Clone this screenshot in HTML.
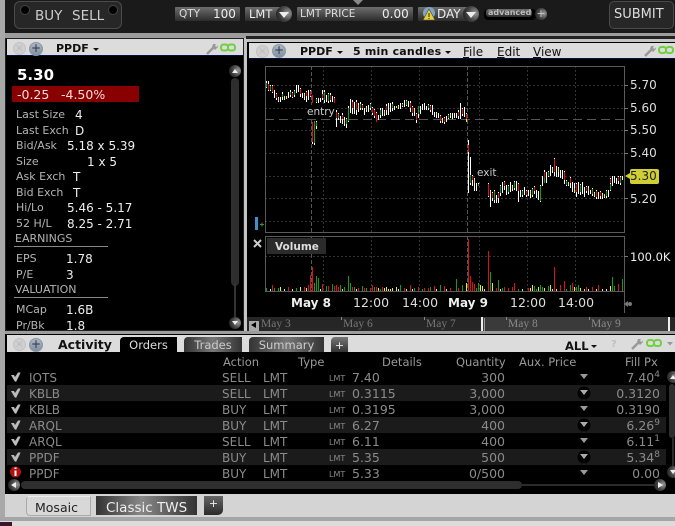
<!DOCTYPE html>
<html><head><meta charset="utf-8"><style>
html,body{margin:0;padding:0;width:675px;height:526px;overflow:hidden;background:#c4c4c4}
body{position:relative;font-family:"DejaVu Sans","Liberation Sans",sans-serif;font-size:11px;color:#ccc}
div,span,svg{position:absolute}
.t{white-space:nowrap;line-height:16px;height:16px}
.l{color:#b4b4b4;font-size:11px}
.v{color:#eee;font-size:12px}
.ax{color:#ddd;font-size:12px;left:630px}
.dt{color:#ddd;font-size:12.500px;top:295px}
.dtb{color:#eee;font-size:12px;font-weight:bold;top:295px}
.nv{font-family:"Liberation Serif",serif;color:#777;font-size:11.5px;top:316px}
.g{color:#8a8a8a;font-size:12px}
.h{color:#999;font-size:11.5px;top:354px}
.box{background:linear-gradient(#6e6e6e,#2c2c2c);border-radius:1px}
.rnd{border-radius:50%;background:radial-gradient(circle at 75% 45%,#999,#444 50%,#111)}
.row{left:7px;width:659px;height:16px;background:#1b1b1b}
.tab{top:337px;height:15px;background:linear-gradient(90deg,#333,#777 50%,#333);color:#ccc;font-size:11.5px;line-height:17px;text-align:center;border-radius:4px 0 0 0}
.hd{background:#dcdcdc;border-bottom:1px solid #00104a}
.x1{width:13px;height:13px;border-radius:50%;background:#cfcfcf;border:1px solid #c2c2c2;box-sizing:border-box;color:#bbb;font-size:10px;line-height:11px;text-align:center}
.x2{width:14px;height:14px;border-radius:50%;background:linear-gradient(#a9b8c4,#7f90a0);border:1px solid #8a98a4;box-sizing:border-box;color:#334;font-size:12px;line-height:11px;text-align:center}
.bk{color:#111;font-weight:bold;font-size:12px}
</style></head><body>

<!-- top bar -->
<div style="left:5px;top:0;width:670px;height:33px;background:#1a1a1a"></div>
<div style="left:353px;top:0;width:0;height:0;border-left:5px solid transparent;border-right:5px solid transparent;border-top:5px solid #888"></div>
<div style="left:14px;top:1px;width:106px;height:26px;background:#272727;border:1px solid #4a4a4a;border-radius:6px"></div>
<div style="left:20px;top:5px;width:8px;height:8px;border-radius:50%;background:#000;border:1px solid #444"></div>
<div style="left:108px;top:5px;width:8px;height:8px;border-radius:50%;background:#000;border:1px solid #444"></div>
<span class="t" style="left:35px;top:8px;font-size:13.500px;color:#ccc">BUY</span>
<span class="t" style="left:72px;top:8px;font-size:13.500px;color:#ccc">SELL</span>

<div class="box" style="left:175px;top:7px;width:65px;height:14px"></div>
<span class="t" style="left:179px;top:6px;font-size:10.500px;color:#ddd">QTY</span>
<span class="t" style="left:213px;top:6px;font-size:12px;color:#eee">100</span>
<div class="box" style="left:245px;top:7px;width:36px;height:14px"></div>
<span class="t" style="left:249px;top:6px;font-size:11.5px;color:#eee">LMT</span>
<div class="rnd" style="left:276px;top:6px;width:16px;height:16px"></div>
<div style="left:279px;top:12px;border-left:5px solid transparent;border-right:5px solid transparent;border-top:6px solid #eee"></div>
<div class="box" style="left:297px;top:7px;width:116px;height:14px"></div>
<span class="t" style="left:300px;top:6px;font-size:10.500px;color:#ddd">LMT PRICE</span>
<span class="t" style="left:382px;top:6px;font-size:12px;color:#eee">0.00</span>
<div class="box" style="left:418px;top:7px;width:52px;height:14px"></div>
<svg style="left:422px;top:7px" width="14" height="14"><circle cx="7" cy="6" r="6" fill="#7fa6c8"/><path d="M7 2L13 13H1Z" fill="#e8d040" stroke="#443" stroke-width=".6"/><path d="M7 6v4M7 11v1" stroke="#222"/></svg>
<span class="t" style="left:437px;top:6px;font-size:12px;color:#eee">DAY</span>
<div class="rnd" style="left:463px;top:6px;width:16px;height:16px"></div>
<div style="left:466px;top:12px;border-left:5px solid transparent;border-right:5px solid transparent;border-top:6px solid #eee"></div>
<div style="left:484px;top:9px;width:52px;height:11px;background:#000;border-radius:4px"></div>
<div class="box" style="left:486px;top:9px;width:46px;height:8px;border-radius:3px"></div>
<span class="t" style="left:488px;top:5px;font-size:8px;font-weight:bold;color:#bbb">advanced</span>
<div class="rnd" style="left:535px;top:8px;width:12px;height:12px;color:#ccc;font-size:11px;line-height:12px;text-align:center">+</div>
<div style="left:609px;top:1px;width:63px;height:26px;background:#272727;border:1px solid #4a4a4a;border-radius:5px"></div>
<span class="t" style="left:614px;top:7px;font-size:13px;color:#ddd">SUBMIT</span>

<!-- strips -->
<div style="left:0;top:33px;width:675px;height:5px;background:#9c9c9c"></div>
<div style="left:246px;top:36px;width:429px;height:3px;background:#222"></div>
<div style="left:0;top:0;width:5px;height:526px;background:#a8a8a8"></div>

<!-- left panel -->
<div style="left:5px;top:38px;width:239px;height:293px;background:#000;border:1px solid #222;box-sizing:border-box"></div>
<div class="hd" style="left:7px;top:39px;width:236px;height:16px"></div>
<div class="x1" style="left:13px;top:42px">×</div>
<div class="x2" style="left:29px;top:42px">+</div>
<span class="t bk" style="left:56px;top:41px;font-size:11px">PPDF</span>
<div style="left:93px;top:48px;border-left:3px solid transparent;border-right:3px solid transparent;border-top:3px solid #111"></div>
<svg style="left:205px;top:42px" width="34" height="14"><path d="M2 12L9 5" stroke="#999" stroke-width="2.5"/><path d="M8 2l3 0-1 2 2 1 1-2 0 2-3 3-3-3z" fill="#999"/><rect x="16" y="2.500" width="7" height="6" rx="2.500" fill="none" stroke="#6fd040" stroke-width="2"/><rect x="23" y="2.500" width="7" height="6" rx="2.500" fill="none" stroke="#6fd040" stroke-width="2"/></svg>

<span class="t" style="left:17px;top:67px;font-size:15px;font-weight:bold;color:#fff">5.30</span>
<div style="left:12px;top:86px;width:127px;height:16px;background:#880000"></div>
<span class="t" style="left:17px;top:87px;font-size:12.500px;color:#f0dcdc">-0.25</span>
<span class="t" style="left:61px;top:87px;font-size:12.500px;color:#f0dcdc">-4.50%</span>

<div style="left:7px;top:57px;width:236px;height:273px;overflow:hidden">
<span class="t l" style="left:9px;top:50px">Last Size</span><span class="t v" style="left:68px;top:50px">4</span>
<span class="t l" style="left:9px;top:66px">Last Exch</span><span class="t v" style="left:68px;top:66px">D</span>
<span class="t l" style="left:9px;top:81px">Bid/Ask</span><span class="t v" style="left:60px;top:81px">5.18 x 5.39</span>
<span class="t l" style="left:9px;top:97px">Size</span><span class="t v" style="left:80px;top:97px">1 x 5</span>
<span class="t l" style="left:9px;top:112px">Ask Exch</span><span class="t v" style="left:66px;top:112px">T</span>
<span class="t l" style="left:9px;top:128px">Bid Exch</span><span class="t v" style="left:66px;top:128px">T</span>
<span class="t l" style="left:9px;top:143px">Hi/Lo</span><span class="t v" style="left:60px;top:143px">5.46 - 5.17</span>
<span class="t l" style="left:9px;top:159px">52 H/L</span><span class="t v" style="left:60px;top:159px">8.25 - 2.71</span>
<span class="t l" style="left:8px;top:174px">EARNINGS</span>
<div style="left:7px;top:189px;width:94px;height:1px;background:#888"></div>
<span class="t l" style="left:9px;top:194px">EPS</span><span class="t v" style="left:59px;top:194px">1.78</span>
<span class="t l" style="left:9px;top:210px">P/E</span><span class="t v" style="left:59px;top:210px">3</span>
<span class="t l" style="left:8px;top:225px">VALUATION</span>
<div style="left:7px;top:240px;width:94px;height:1px;background:#888"></div>
<span class="t l" style="left:9px;top:245px">MCap</span><span class="t v" style="left:59px;top:245px">1.6B</span>
<span class="t l" style="left:9px;top:261px">Pr/Bk</span><span class="t v" style="left:59px;top:261px">1.8</span>
</div>
<!-- left scrollbar -->
<div class="rnd" style="left:229px;top:65px;width:12px;height:12px"></div>
<div style="left:232px;top:69px;border-left:3.500px solid transparent;border-right:3.500px solid transparent;border-bottom:4px solid #eee"></div>
<div style="left:231px;top:78px;width:8px;height:208px;background:#2e2e2e;border-radius:4px"></div>
<div style="left:234px;top:284px;width:2px;height:34px;background:#333"></div>
<div class="rnd" style="left:229px;top:317px;width:12px;height:12px"></div>
<div style="left:232px;top:321px;border-left:3.500px solid transparent;border-right:3.500px solid transparent;border-top:4px solid #eee"></div>

<!-- chart panel -->
<div style="left:247px;top:42px;width:428px;height:290px;background:#000"></div>
<div class="hd" style="left:249px;top:43px;width:426px;height:15px"></div>
<div class="x1" style="left:256px;top:45px">×</div>
<div class="x2" style="left:272px;top:44px">+</div>
<span class="t bk" style="left:300px;top:44px;font-size:11px">PPDF</span>
<div style="left:337px;top:51px;border-left:3px solid transparent;border-right:3px solid transparent;border-top:3px solid #111"></div>
<span class="t bk" style="left:353px;top:44px;font-size:11px;letter-spacing:.2px">5 min candles</span>
<div style="left:445px;top:51px;border-left:3px solid transparent;border-right:3px solid transparent;border-top:3px solid #111"></div>
<span class="t" style="left:463px;top:44px;color:#111;font-size:12px"><u>F</u>ile</span>
<span class="t" style="left:497px;top:44px;color:#111;font-size:12px"><u>E</u>dit</span>
<span class="t" style="left:533px;top:44px;color:#111;font-size:12px"><u>V</u>iew</span>
<svg style="left:643px;top:44px" width="32" height="14"><path d="M2 12L9 5" stroke="#999" stroke-width="2.500"/><path d="M8 2l3 0-1 2 2 1 1-2 0 2-3 3-3-3z" fill="#999"/><rect x="16" y="3" width="7" height="6" rx="2.500" fill="none" stroke="#6fd040" stroke-width="2"/><rect x="23" y="3" width="7" height="6" rx="2.500" fill="none" stroke="#6fd040" stroke-width="2"/></svg>

<svg style="left:0;top:0" width="675" height="526" shape-rendering="crispEdges" fill="none">
<g stroke="#333" stroke-dasharray="2 2">
<path d="M265 85.500H624M265 108.500H624M265 130.500H624M265 153.500H624M265 176.500H624M265 198.500H624M265 221.500H624M265 256.500H624"/>
<path d="M323.500 66V232M371.500 66V232M419.500 66V232M479.500 66V232M527.500 66V232M575.500 66V232M323.500 236V291M371.500 236V291M419.500 236V291M479.500 236V291M527.500 236V291M575.500 236V291"/>
</g>
<path d="M265 119.500H624" stroke="#555" stroke-dasharray="9 5"/>
<path d="M311.500 66V232M467.500 66V232M311.500 236V291M467.500 236V291" stroke="#555" stroke-dasharray="4 2"/>
<path d="M265.500 66V232.500H624.500V66.500H265M265.500 236.500H624.500M265.500 236V291.500H624M624.500 236V313" stroke="#5a5a5a"/>
<path d="M624 85.500h4M624 108.500h4M624 130.500h4M624 153.500h4M624 198.500h4M624 256.500h4" stroke="#777"/>
<!-- white wicks -->
<path stroke="#fff" d="M266.500 81V88M268.500 81V91M270.500 85V91M272.500 85V93M274.500 90V98M276.500 93V100M278.500 97V102M280.500 97V102M282.500 92V100M284.500 96V100M286.500 96V99M288.500 92V98M290.500 90V97M292.500 92V98M294.500 90V97M296.500 85V93M298.500 85V92M300.500 88V97M302.500 93V98M304.500 93V100M306.500 91V102M308.500 90V100M310.500 90V97M312.500 122V144M314.500 121V145M316.500 121V129M316.500 98V103M318.500 98V103M320.500 98V102M322.500 90V100M324.500 90V103M326.500 95V102M328.500 93V103M330.500 93V102M332.500 96V102M334.500 97V103M336.500 110V127M338.500 113V120M340.500 116V123M342.500 113V124M344.500 117V126M346.500 118V128M348.500 106V122M350.500 99V113M352.500 100V114M354.500 102V114M356.500 100V115M358.500 103V112M360.500 102V110M362.500 104V110M364.500 108V115M366.500 106V112M368.500 105V112M370.500 103V110M372.500 107V115M374.500 109V118M376.500 112V122M378.500 115V120M380.500 108V118M382.500 108V116M384.500 110V116M386.500 104V115M388.500 103V115M390.500 103V112M392.500 102V111M394.500 106V110M396.500 106V108M398.500 105V109M400.500 103V109M402.500 103V107M404.500 100V107M406.500 100V106M408.500 101V107M410.500 101V112M412.500 106V116M414.500 108V116M416.500 113V123M418.500 111V118M420.500 106V114M422.500 104V110M424.500 103V110M426.500 106V110M428.500 104V110M430.500 105V112M432.500 105V115M434.500 112V117M436.500 112V118M438.500 113V118M440.500 115V123M442.500 118V123M444.500 117V124M446.500 116V122M448.500 114V119M450.500 113V118M452.500 113V119M454.500 113V118M456.500 113V118M458.500 110V119M460.500 103V119M462.500 108V116M464.500 107V117M466.500 113V122M468.500 140V193M470.500 157V185M472.500 175V186M474.500 178V191M476.500 183V191M478.500 183V186M488.500 183V197M490.500 190V207M492.500 192V201M494.500 190V203M496.500 195V203M498.500 192V203M500.500 185V196M502.500 182V193M504.500 181V190M506.500 185V195M508.500 185V194M510.500 182V192M512.500 185V191M514.500 181V190M516.500 181V191M518.500 183V202M520.500 190V197M522.500 190V197M524.500 187V195M526.500 190V197M528.500 190V196M530.500 190V198M532.500 188V197M534.500 186V194M536.500 190V198M538.500 191V200M540.500 185V202M542.500 176V186M544.500 170V183M546.500 172V183M548.500 171V177M550.500 165V176M552.500 167V173M554.500 158V176M556.500 166V177M558.500 167V177M560.500 170V178M562.500 170V179M564.500 171V184M566.500 180V186M568.500 182V186M570.500 177V188M572.500 182V192M574.500 183V193M576.500 183V197M578.500 182V194M580.500 184V195M582.500 182V194M584.500 187V197M586.500 186V193M588.500 186V195M590.500 190V194M592.500 188V196M594.500 192V197M596.500 190V199M598.500 192V199M600.500 191V199M602.500 193V199M604.500 194V198M606.500 190V198M608.500 190V197M610.500 178V191M612.500 176V186M614.500 176V183M616.500 178V184M618.500 176V184M620.500 176V185M622.500 176V180"/>
<!-- red bodies -->
<path stroke="#e01010" d="M268.500 84V90M272.500 86V92M276.500 94V98M292.500 93V97M300.500 89V94M306.500 92V96M310.500 91V96M312.500 95V103M312.500 122V142M322.500 94V98M330.500 95V100M334.500 98V103M336.500 112V118M342.500 115V119M352.500 102V108M356.500 102V110M362.500 105V108M372.500 108V113M374.500 110V116M376.500 113V122M386.500 106V110M410.500 103V108M412.500 107V113M416.500 114V120M430.500 106V110M440.500 116V121M444.500 118V122M458.500 112V116M462.500 109V114M466.500 114V121M468.500 145V152M472.500 176V180M488.500 184V196M492.500 193V198M498.500 193V198M504.500 182V186M518.500 184V191M526.500 191V195M534.500 187V191M544.500 172V178M554.500 159V172M564.500 172V180M570.500 178V183M576.500 184V192M586.500 187V191M596.500 191V197M600.500 192V196M610.500 179V183M618.500 177V181"/>
<!-- green bodies -->
<path stroke="#12a012" d="M266.500 83V87M270.500 86V90M282.500 94V97M290.500 92V95M294.500 91V95M314.500 121V143M316.500 122V126M316.500 99V102M324.500 92V100M328.500 94V101M338.500 114V118M346.500 119V124M348.500 108V121M360.500 104V108M370.500 104V108M380.500 110V115M392.500 104V108M402.500 104V106M406.500 101V105M418.500 106V114M428.500 105V108M448.500 115V118M470.500 175V183M478.500 184V186M494.500 191V200M500.500 186V193M508.500 186V192M514.500 182V188M522.500 191V195M532.500 189V195M540.500 186V201M544.500 178V183M548.500 172V176M566.500 181V185M580.500 185V192M592.500 189V194M606.500 191V196M610.500 184V190M620.500 177V183"/>
<!-- yellow bodies -->
<path stroke="#f0e820" d="M278.500 98V101M284.500 96V99M286.500 96V99M304.500 94V97M344.500 120V124M358.500 105V109M366.500 107V110M384.500 111V114M396.500 106V108M398.500 106V108M414.500 109V112M436.500 113V115M442.500 119V121M450.500 114V116M466.500 119V122M474.500 179V183M490.500 191V194M512.500 186V189M530.500 191V194M552.500 168V171M558.500 168V172M568.500 182V185M574.500 188V192M588.500 188V191M594.500 193V196M602.500 194V197M604.500 194V197"/>

<!-- volume -->
<path stroke="#e01010" d="M272.500 285V291M288.500 287V291M304.500 287V291M308.500 285V291M310.500 275V291M312.500 267V291M322.500 284V291M328.500 286V291M334.500 286V291M336.500 285V291M338.500 287V291M352.500 287V291M358.500 288V291M364.500 288V291M370.500 288V291M372.500 285V291M376.500 287V291M382.500 287V291M404.500 288V291M410.500 285V291M418.500 287V291M424.500 288V291M428.500 288V291M434.500 286V291M440.500 287V291M444.500 286V291M450.500 288V291M458.500 288V291M466.500 287V291M468.500 239V291M470.500 276V291M472.500 282V291M474.500 284V291M488.500 251V291M496.500 288V291M504.500 287V291M508.500 288V291M512.500 287V291M514.500 283V291M528.500 288V291M554.500 267V291M560.500 285V291M564.500 281V291M572.500 283V291M586.500 287V291M592.500 287V291M598.500 285V291M618.500 284V291"/>
<path stroke="#12a012" d="M266.500 288V291M274.500 288V291M278.500 288V291M296.500 288V291M314.500 283V291M316.500 276V291M318.500 278V291M326.500 286V291M332.500 284V291M340.500 285V291M344.500 287V291M348.500 276V291M350.500 283V291M354.500 287V291M362.500 286V291M366.500 288V291M374.500 287V291M380.500 289V291M400.500 285V291M414.500 288V291M422.500 289V291M430.500 287V291M440.500 285V291M456.500 279V291M462.500 285V291M478.500 283V291M476.500 288V291M490.500 272V291M498.500 280V291M502.500 288V291M518.500 289V291M534.500 286V291M536.500 289V291M540.500 285V291M542.500 287V291M548.500 286V291M566.500 289V291M570.500 285V291M576.500 287V291M578.500 285V291M612.500 277V291M614.500 286V291M622.500 279V291"/>
<path stroke="#f0e820" d="M280.500 287V291M300.500 287V291M306.500 288V291M342.500 289V291M378.500 288V291M384.500 288V291M386.500 287V291M388.500 289V291M392.500 288V291M396.500 287V291M406.500 289V291M466.500 283V291M480.500 285V291M482.500 286V291M492.500 283V291M530.500 288V291M532.500 285V291M538.500 287V291M544.500 288V291M550.500 285V291M556.500 289V291M574.500 287V291M580.500 288V291M584.500 289V291M596.500 289V291M610.500 286V291"/>
<path stroke="#ddd" d="M270.500 289V291M284.500 289V291M292.500 289V291M320.500 289V291M356.500 289V291M390.500 289V291M398.500 289V291M412.500 289V291M436.500 289V291M446.500 289V291M484.500 289V291M500.500 289V291M522.500 289V291M552.500 289V291M588.500 289V291M602.500 289V291M606.500 289V291"/>
</svg>

<span class="t" style="left:307px;top:105px;font-size:10.500px;color:#ccc;background:#000;line-height:14px;height:14px">entry</span>
<span class="t" style="left:477px;top:166px;font-size:10.500px;color:#ccc;background:#000;line-height:14px;height:14px">exit</span>
<span class="t ax" style="top:77px">5.70</span>
<span class="t ax" style="top:100px">5.60</span>
<span class="t ax" style="top:122px">5.50</span>
<span class="t ax" style="top:145px">5.40</span>
<span class="t ax" style="top:191px">5.20</span>
<div style="left:625px;top:173px;border-top:3px solid transparent;border-bottom:3px solid transparent;border-right:5px solid #cfcf35"></div>
<div style="left:630px;top:169px;width:29px;height:15px;background:#cfcf35;border-radius:2px"></div>
<span class="t ax" style="top:168px;color:#222;left:630px">5.30</span>
<span class="t ax" style="top:249px;font-size:11.500px;color:#eee">100.0K</span>
<div style="left:267px;top:238px;width:59px;height:16px;background:#2b2b2b"></div>
<span class="t" style="left:275px;top:239px;font-size:10.500px;font-weight:bold;color:#ddd">Volume</span>
<svg style="left:253px;top:239px" width="9" height="9"><path d="M1 1L8 8M8 1L1 8" stroke="#ccc" stroke-width="2"/></svg>
<svg style="left:253px;top:216px" width="11" height="15"><path d="M3.500 1V14" stroke="#3f8fd0" stroke-width="3"/><path d="M7 8.500h4M9 6.500v4" stroke="#2a9a40"/></svg>

<span class="t dtb" style="left:291px">May 8</span>
<span class="t dt" style="left:353px">12:00</span>
<span class="t dt" style="left:402px">14:00</span>
<span class="t dtb" style="left:448px">May 9</span>
<span class="t dt" style="left:510px">12:00</span>
<span class="t dt" style="left:558px">14:00</span>
<div style="left:624px;top:301px;border-top:3px solid transparent;border-bottom:3px solid transparent;border-right:4px solid #777"></div>
<div style="left:628px;top:302px;width:4px;height:4px;background:#777;border-radius:50%"></div>

<!-- navigator -->
<div style="left:247px;top:317px;width:428px;height:14px;background:#262626"></div>
<div style="left:249px;top:321px;width:10px;height:10px;background:#a8a8a8"></div>
<div style="left:251px;top:322px;border-top:3px solid transparent;border-bottom:3px solid transparent;border-right:5px solid #000"></div>
<div style="left:481px;top:317px;width:187px;height:14px;background:#3a3a3a"></div>
<div style="left:481px;top:317px;width:2px;height:14px;background:#eee"></div>
<div style="left:484px;top:318px;width:1px;height:13px;background:#999"></div>
<div style="left:668px;top:317px;width:2px;height:14px;background:#eee"></div>
<span class="t nv" style="left:261px">May 3</span>
<span class="t nv" style="left:343px">May 6</span>
<span class="t nv" style="left:426px">May 7</span>
<span class="t nv" style="left:508px;color:#8a8a8a">May 8</span>
<span class="t nv" style="left:591px;color:#8a8a8a">May 9</span>
<div style="left:341px;top:317px;width:1px;height:3px;background:#888"></div>
<div style="left:424px;top:317px;width:1px;height:3px;background:#888"></div>
<div style="left:506px;top:317px;width:1px;height:3px;background:#888"></div>
<div style="left:589px;top:317px;width:1px;height:3px;background:#888"></div>
<div style="left:5px;top:331px;width:670px;height:4px;background:#9c9c9c"></div>

<!-- activity panel -->
<div style="left:5px;top:334px;width:670px;height:160px;background:#000"></div>
<div class="hd" style="left:7px;top:335px;width:668px;height:17px;border:0"></div>
<div class="x1" style="left:13px;top:338px">×</div>
<div class="x2" style="left:29px;top:338px">+</div>
<span class="t bk" style="left:58px;top:337px;font-size:12.500px">Activity</span>
<div class="tab" style="left:120px;width:57px;background:#000;color:#ddd">Orders</div>
<div class="tab" style="left:184px;width:58px">Trades</div>
<div class="tab" style="left:249px;width:75px">Summary</div>
<div class="tab" style="left:331px;width:17px;background:linear-gradient(#777,#333);color:#eee;font-size:11px">+</div>
<span class="t bk" style="left:565px;top:338px;font-size:11.500px">ALL</span>
<div style="left:591px;top:345px;border-left:3px solid transparent;border-right:3px solid transparent;border-top:3px solid #111"></div>
<span class="t" style="left:611px;top:337px;font-size:10px;font-weight:bold;color:#c0c0c0">?</span>
<svg style="left:630px;top:337px" width="46" height="14"><path d="M2 12L9 5" stroke="#999" stroke-width="2.500"/><path d="M8 2l3 0-1 2 2 1 1-2 0 2-3 3-3-3z" fill="#999"/><rect x="17" y="3" width="7" height="6" rx="2.500" fill="none" stroke="#6fd040" stroke-width="2"/><rect x="24" y="3" width="7" height="6" rx="2.500" fill="none" stroke="#6fd040" stroke-width="2"/><path d="M37 5h6l-3 3.500z" fill="#999"/></svg>

<span class="t h" style="left:223px">Action</span>
<span class="t h" style="left:298px">Type</span>
<span class="t h" style="left:382px">Details</span>
<span class="t h" style="left:456px">Quantity</span>
<span class="t h" style="left:519px">Aux. Price</span>
<span class="t h" style="left:625px">Fill Px</span>

<div class="row" style="top:385px"></div>
<div class="row" style="top:417px"></div>
<div class="row" style="top:449px"></div>

<svg style="left:10px;top:372px" width="14" height="110"><g fill="#bbb"><path d="M1 3h3l1 2 3-4.500h2.500l-1 2.500-3.500 7-1.500-1z"/><path d="M1 19h3l1 2 3-4.500h2.500l-1 2.500-3.500 7-1.500-1z"/><path d="M1 35h3l1 2 3-4.500h2.500l-1 2.500-3.500 7-1.500-1z"/><path d="M1 51h3l1 2 3-4.500h2.500l-1 2.500-3.500 7-1.500-1z"/><path d="M1 67h3l1 2 3-4.500h2.500l-1 2.500-3.500 7-1.500-1z"/><path d="M1 83h3l1 2 3-4.500h2.500l-1 2.500-3.500 7-1.500-1z"/></g><circle cx="5.500" cy="100" r="5.500" fill="#b01010"/><path d="M5.500 95.500v1.500M5.500 98.500v5.500" stroke="#fff" stroke-width="2"/></svg>

<span class="t g" style="left:29px;top:370px">IOTS</span><span class="t g" style="left:222px;top:370px">SELL</span><span class="t g" style="left:263px;top:370px">LMT</span><span class="t g" style="left:329px;top:371px;font-size:8px">LMT</span><span class="t g" style="left:352px;top:370px;font-size:12.500px">7.40</span><span class="t g" style="right:170px;top:370px;font-size:12.500px">300</span><span class="t g" style="right:15px;top:370px;font-size:12.500px">7.40<sup style="font-size:9px;line-height:0">4</sup></span>
<span class="t g" style="left:29px;top:386px">KBLB</span><span class="t g" style="left:222px;top:386px">SELL</span><span class="t g" style="left:263px;top:386px">LMT</span><span class="t g" style="left:329px;top:387px;font-size:8px">LMT</span><span class="t g" style="left:352px;top:386px;font-size:12.500px">0.3115</span><span class="t g" style="right:170px;top:386px;font-size:12.500px">3,000</span><span class="t g" style="right:15px;top:386px;font-size:12.500px">0.3120</span>
<span class="t g" style="left:29px;top:402px">KBLB</span><span class="t g" style="left:222px;top:402px">BUY</span><span class="t g" style="left:263px;top:402px">LMT</span><span class="t g" style="left:329px;top:403px;font-size:8px">LMT</span><span class="t g" style="left:352px;top:402px;font-size:12.500px">0.3195</span><span class="t g" style="right:170px;top:402px;font-size:12.500px">3,000</span><span class="t g" style="right:15px;top:402px;font-size:12.500px">0.3190</span>
<span class="t g" style="left:29px;top:418px">ARQL</span><span class="t g" style="left:222px;top:418px">BUY</span><span class="t g" style="left:263px;top:418px">LMT</span><span class="t g" style="left:329px;top:419px;font-size:8px">LMT</span><span class="t g" style="left:352px;top:418px;font-size:12.500px">6.27</span><span class="t g" style="right:170px;top:418px;font-size:12.500px">400</span><span class="t g" style="right:15px;top:418px;font-size:12.500px">6.26<sup style="font-size:9px;line-height:0">9</sup></span>
<span class="t g" style="left:29px;top:434px">ARQL</span><span class="t g" style="left:222px;top:434px">SELL</span><span class="t g" style="left:263px;top:434px">LMT</span><span class="t g" style="left:329px;top:435px;font-size:8px">LMT</span><span class="t g" style="left:352px;top:434px;font-size:12.500px">6.11</span><span class="t g" style="right:170px;top:434px;font-size:12.500px">400</span><span class="t g" style="right:15px;top:434px;font-size:12.500px">6.11<sup style="font-size:9px;line-height:0">1</sup></span>
<span class="t g" style="left:29px;top:450px">PPDF</span><span class="t g" style="left:222px;top:450px">BUY</span><span class="t g" style="left:263px;top:450px">LMT</span><span class="t g" style="left:329px;top:451px;font-size:8px">LMT</span><span class="t g" style="left:352px;top:450px;font-size:12.500px">5.35</span><span class="t g" style="right:170px;top:450px;font-size:12.500px">500</span><span class="t g" style="right:15px;top:450px;font-size:12.500px">5.34<sup style="font-size:9px;line-height:0">8</sup></span>
<span class="t g" style="left:29px;top:466px">PPDF</span><span class="t g" style="left:222px;top:466px">BUY</span><span class="t g" style="left:263px;top:466px">LMT</span><span class="t g" style="left:329px;top:467px;font-size:8px">LMT</span><span class="t g" style="left:352px;top:466px;font-size:12.500px">5.33</span><span class="t g" style="right:170px;top:466px;font-size:12.500px">0/500</span><span class="t g" style="right:15px;top:466px;font-size:12.500px">0.00</span>

<svg style="left:572px;top:370px" width="24" height="112"><circle cx="12" cy="23" r="6.500" fill="#000"/><circle cx="12" cy="55" r="6.500" fill="#000"/><circle cx="12" cy="87" r="6.500" fill="#000"/><g fill="#9a9a9a"><path d="M8 4h8l-4 5z"/><path d="M8 36h8l-4 5z"/><path d="M8 68h8l-4 5z"/><path d="M8 100h8l-4 5z"/></g><g fill="#aaa"><path d="M8 20h8l-4 5z"/><path d="M8 52h8l-4 5z"/><path d="M8 84h8l-4 5z"/></g></svg>

<!-- activity scrollbars -->
<div style="left:21px;top:481px;width:501px;height:8px;background:#2e2e2e;border-radius:4px"></div>
<div style="left:520px;top:484px;width:135px;height:2px;background:#2a2a2a"></div>
<div class="rnd" style="left:8px;top:479px;width:12px;height:12px"></div>
<div style="left:11px;top:482px;border-top:3px solid transparent;border-bottom:3px solid transparent;border-right:5px solid #eee"></div>
<div class="rnd" style="left:654px;top:479px;width:12px;height:12px"></div>
<div style="left:658px;top:482px;border-top:3px solid transparent;border-bottom:3px solid transparent;border-left:5px solid #eee"></div>
<div class="rnd" style="left:667px;top:371px;width:12px;height:12px"></div>
<div style="left:670px;top:375px;border-left:3.500px solid transparent;border-right:3.500px solid transparent;border-bottom:4px solid #eee"></div>
<div style="left:669px;top:384px;width:6px;height:54px;background:#2e2e2e;border-radius:3px"></div>
<div style="left:672px;top:438px;width:2px;height:28px;background:#2a2a2a"></div>
<div class="rnd" style="left:667px;top:466px;width:12px;height:12px"></div>
<div style="left:670px;top:470px;border-left:3.500px solid transparent;border-right:3.500px solid transparent;border-top:4px solid #eee"></div>

<!-- bottom -->
<div style="left:5px;top:494px;width:670px;height:24px;background:#d4d4d4"></div>
<div style="left:0;top:517px;width:675px;height:4px;background:#a6a6a6"></div>
<div style="left:0;top:521px;width:675px;height:5px;background:#dcdcdc"></div>
<div style="left:0;top:522px;width:12px;height:4px;background:#3a1530"></div>
<div style="left:26px;top:496px;width:63px;height:18px;background:#d8d8d8;border:1px solid #aaa;border-top:1px solid #eee;border-radius:4px 0 0 4px"></div>
<span class="t" style="left:35px;top:500px;font-size:12.500px;color:#222">Mosaic</span>
<div style="left:96px;top:496px;width:101px;height:19px;background:linear-gradient(90deg,#333,#888 45%,#333)"></div>
<span class="t" style="left:106px;top:500px;font-size:13.500px;color:#eee">Classic TWS</span>
<div style="left:204px;top:496px;width:19px;height:19px;background:linear-gradient(#666,#2a2a2a);border-radius:0 0 5px 0;color:#eee;font-size:11px;line-height:16px;text-align:center">+</div>
</body></html>
